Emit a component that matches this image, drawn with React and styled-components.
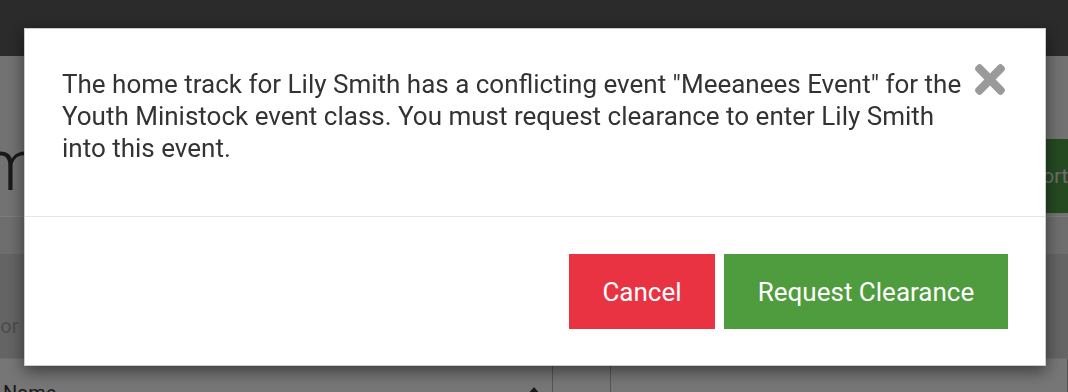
import * as React from "react";
import styled, { createGlobalStyle } from "styled-components";

const GlobalStyle = createGlobalStyle`
  html, body {
    margin: 0;
    padding: 0;
    overflow: hidden;
    background: #e4e4e4;
    font-family: Roboto, "Liberation Sans", Arial, sans-serif;
  }
  * {
    box-sizing: border-box;
  }
`;

// Page behind the dialog
const Page = styled.div`
  width: 1068px;
  height: 392px;
  overflow: hidden;
  background: #e4e4e4;
`;

const NavBar = styled.header`
  height: 56px;
  background: #565656;
`;

const TitleRow = styled.div`
  display: flex;
  align-items: flex-start;
  justify-content: space-between;
  height: 161px;
  padding-top: 83px;
  border-bottom: 1px solid #f6f6f6;
`;

const PageTitle = styled.h1`
  margin: 0 0 0 -126px;
  font-size: 72px;
  font-weight: 300;
  line-height: 54px;
  color: #333;
  white-space: nowrap;
`;

const ImportButton = styled.button`
  height: 74px;
  margin-right: -20px;
  padding: 0 20px;
  border: none;
  background: #4a9444;
  color: #dcdcdc;
  font-family: inherit;
  font-size: 20px;
`;

const TabStrip = styled.div`
  height: 37px;
  background: #dcdcdc;
`;

const FilterPanel = styled.div`
  display: flex;
  align-items: flex-end;
  height: 105px;
  padding-bottom: 20px;
  background: #c8c8c8;
  border-bottom: 1px solid #d8d8d8;
`;

const FilterText = styled.span`
  margin-left: -29px;
  font-size: 20px;
  line-height: 24px;
  color: #999;
`;

const TableHead = styled.div`
  display: grid;
  grid-template-columns: 553px 58px 1fr;
  height: 60px;
  background: #ececec;
`;

const HeadCell = styled.div`
  display: flex;
  align-items: flex-start;
  justify-content: space-between;
  padding: 22px 12px 0 3px;
  border-right: 1px solid #aaa;
  font-size: 20px;
  color: #333;
`;

const SortArrow = styled.span`
  width: 0;
  height: 0;
  margin-top: 6px;
  border-left: 6px solid transparent;
  border-right: 6px solid transparent;
  border-bottom: 7px solid #333;
`;

// Dialog
const Backdrop = styled.div`
  position: fixed;
  inset: 0;
  display: flex;
  justify-content: center;
  align-items: flex-start;
  padding: 28px 22px 0 24px;
  background: rgba(0, 0, 0, 0.5);
`;

const Modal = styled.div`
  width: 1022px;
  height: 338px;
  background: #fff;
  border: 1px solid rgba(0, 0, 0, 0.2);
  box-shadow: 0 5px 15px rgba(0, 0, 0, 0.5);
`;

const ModalHeader = styled.div`
  display: flex;
  align-items: flex-start;
  gap: 6px;
  height: 188px;
  padding: 39px 40px 0 37px;
  border-bottom: 1px solid #e5e5e5;
`;

const Message = styled.p`
  flex: 1;
  margin: 0;
  font-size: 26px;
  line-height: 32px;
  color: #333;
`;

const CloseButton = styled.button`
  display: flex;
  flex: none;
  width: 30px;
  height: 31px;
  margin-top: -4px;
  padding: 0;
  border: none;
  background: none;
  color: #9a9a9a;
  cursor: pointer;

  svg {
    width: 30px;
    height: 31px;
  }
`;

const ModalFooter = styled.div`
  display: flex;
  justify-content: flex-end;
  gap: 9px;
  padding: 37px 37px 0;
`;

const Button = styled.button`
  width: ${(p) => p.$width}px;
  height: 75px;
  border: none;
  background: ${(p) => (p.$danger ? "#e93343" : "#4f9c3e")};
  color: #fff;
  font-family: inherit;
  font-size: 26px;
  cursor: pointer;
`;

const TimesIcon = () => (
  <svg viewBox="0 80 352 352" preserveAspectRatio="none" fill="currentColor">
    <path d="M242.72 256l100.07-100.07c12.28-12.28 12.28-32.19 0-44.48l-22.24-22.24c-12.28-12.28-32.19-12.28-44.48 0L176 189.28 75.930 89.21c-12.28-12.28-32.19-12.28-44.48 0L9.21 111.45c-12.28 12.28-12.28 32.19 0 44.48L109.28 256 9.21 356.07c-12.28 12.28-12.28 32.19 0 44.48l22.24 22.24c12.28 12.28 32.2 12.28 44.48 0L176 322.72l100.07 100.07c12.28 12.28 32.2 12.28 44.48 0l22.24-22.240c12.28-12.28 12.28-32.19 0-44.48L242.72 256z" />
  </svg>
);

const App = () => {
  return (
    <>
      <GlobalStyle />
      <Page>
        <NavBar />
        <TitleRow>
          <PageTitle>Form</PageTitle>
          <ImportButton>Import</ImportButton>
        </TitleRow>
        <TabStrip />
        <FilterPanel>
          <FilterText>Color</FilterText>
        </FilterPanel>
        <TableHead>
          <HeadCell>
            Name
            <SortArrow />
          </HeadCell>
          <HeadCell />
          <HeadCell />
        </TableHead>
      </Page>
      <Backdrop>
        <Modal>
          <ModalHeader>
            <Message>
              The home track for Lily Smith has a conflicting event "Meeanees
              Event" for the Youth Ministock event class. You must request
              clearance to enter Lily Smith into this event.
            </Message>
            <CloseButton aria-label="Close">
              <TimesIcon />
            </CloseButton>
          </ModalHeader>
          <ModalFooter>
            <Button $danger $width={146}>
              Cancel
            </Button>
            <Button $width={284}>Request Clearance</Button>
          </ModalFooter>
        </Modal>
      </Backdrop>
    </>
  );
};

export default App;
